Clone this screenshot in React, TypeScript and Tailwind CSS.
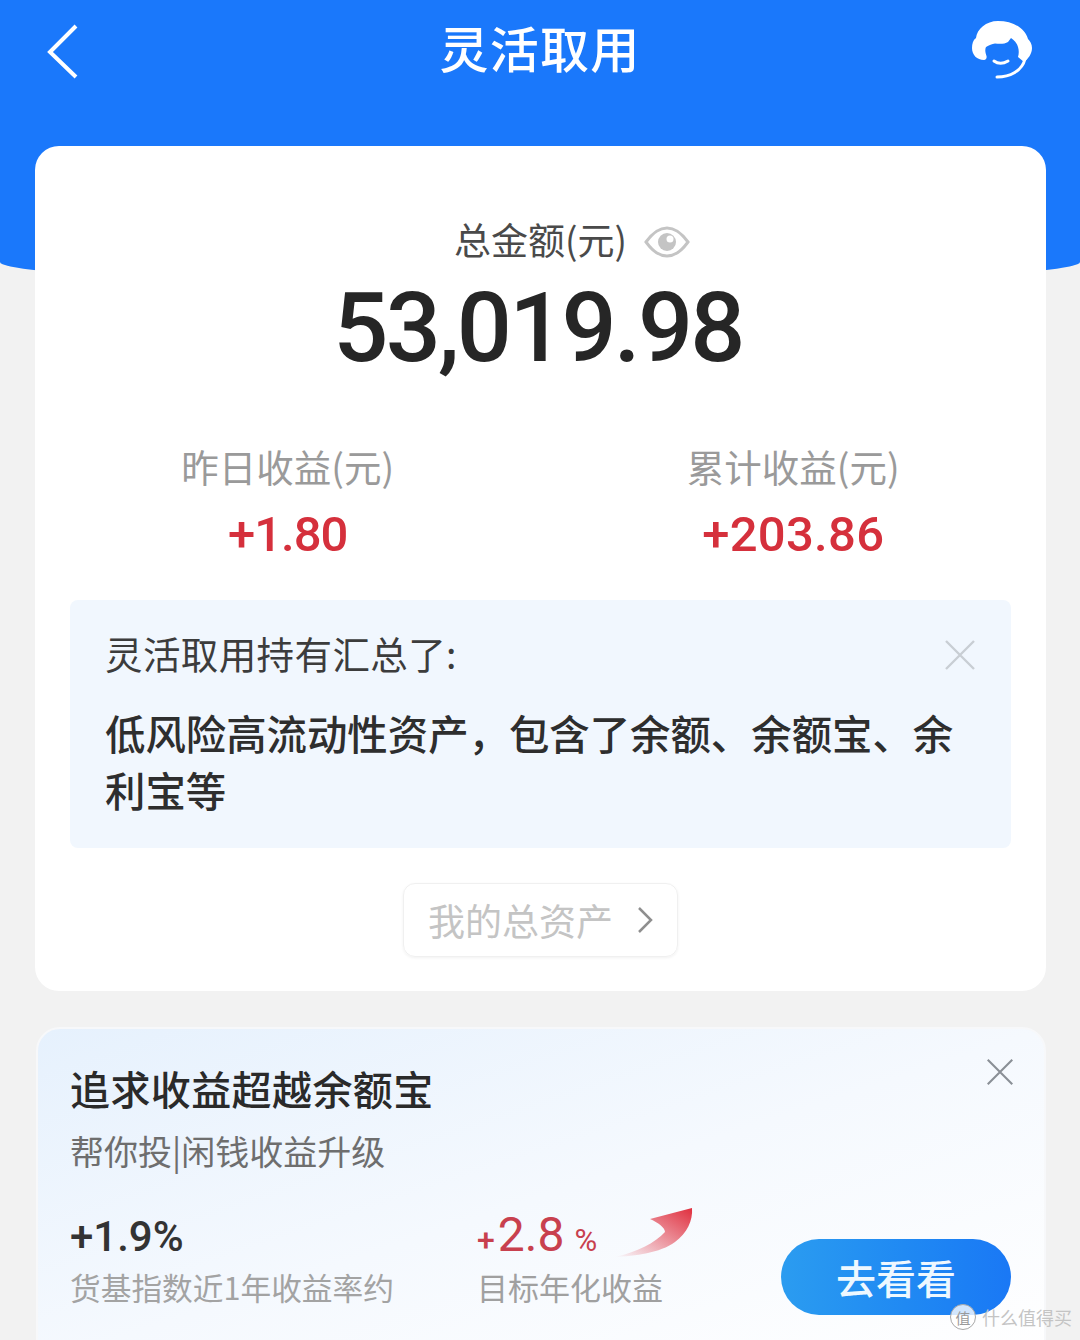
const cjk = 'font-["Noto_Sans_CJK_SC","Noto_Sans",sans-serif]';

function Stat({ label, value, tracking }: { label: string; value: string; tracking: string }) {
  return (
    <div className="flex w-[506px] flex-col items-center">
      <div className="h-[44px] text-[37.5px] leading-[44px] text-[#9a9a9a]">{label}</div>
      <div className={`mt-[19px] h-[56px] font-['Roboto',sans-serif] text-[49px] font-medium leading-[56px] text-[#d5303c] ${tracking}`}>
        {value}
      </div>
    </div>
  );
}

function CloseIcon({ size, color }: { size: number; color: string }) {
  return (
    <svg width={size} height={size} viewBox="0 0 32 32" fill="none" stroke={color} strokeWidth="2.4">
      <path d="M2 2L30 30M30 2L2 30" />
    </svg>
  );
}

export default function App() {
  return (
    <div className={`relative h-[1340px] w-[1080px] overflow-hidden bg-[#f2f2f2] ${cjk}`}>
      <header className="grid h-[285px] grid-cols-[1fr_auto_1fr] items-start rounded-b-[50%_23px] bg-[#1a78fb] px-[46px] pt-[20px]">
        <svg width="34" height="56" viewBox="0 0 34 56" fill="none" stroke="#fff" strokeWidth="4" className="mt-[3px]">
          <path d="M30 3L4 29L30 54" />
        </svg>
        <h1 className="mt-[-8px] text-[49px] font-medium leading-[70px] tracking-[1.3px] text-white">灵活取用</h1>
        <svg width="60" height="60" viewBox="0 0 60 60" className="mr-[2px] mt-[1px] justify-self-end">
          <path
            fill="#fff"
            d="M26 0C14 0 5 8 4 17C1 19 0 23 0 27C0 34 5 39 12 39C14 39 15 37 14.5 35C13 31 13 28 14 26C17 24 20 23 23 22.5C28 23 33 23 36 21C37 20 38 18 39 17C42 19 45 22 46 26C47 29 47 33 46 36L52 41C56 38 60 33 60 27C60 23 58 20 56 18C53 7 41 0 26 0Z"
          />
          <path d="M22 40C26 43 31 43 36 40" fill="none" stroke="#fff" strokeWidth="3" strokeLinecap="round" />
          <path d="M25 56C38 56 50 50 53 38" fill="none" stroke="#fff" strokeWidth="3" strokeLinecap="round" />
        </svg>
      </header>

      <main className="ml-[35px] mr-[34px] mt-[-139px] flex h-[845px] flex-col items-center rounded-[24px] bg-white pt-[69px]">
        <div className="relative flex h-[48px] items-center">
          <span className="text-[37px] leading-[48px] text-[#4a4a4a]">总金额(元)</span>
          <svg width="46" height="34" viewBox="0 0 46 34" className="absolute left-[190px] top-[10px]">
            <path d="M2 17C10 6 16 3 23 3C30 3 36 6 44 17C36 28 30 31 23 31C16 31 10 28 2 17Z" fill="none" stroke="#c4c4c4" strokeWidth="3" />
            <circle cx="23" cy="17" r="9" fill="#c4c4c4" />
            <circle cx="26" cy="14" r="3.5" fill="#fff" />
          </svg>
        </div>
        <div className="ml-[-5px] mt-[13px] h-[104px] font-['Roboto',sans-serif] text-[97px] font-medium leading-[104px] tracking-[-2.8px] text-[#262626]">
          53,019.98
        </div>
        <div className="mt-[64px] flex w-full">
          <Stat label="昨日收益(元)" value="+1.80" tracking="tracking-[-1px]" />
          <Stat label="累计收益(元)" value="+203.86" tracking="tracking-[0.3px]" />
        </div>

        <section className="mt-[37px] h-[248px] w-[941px] rounded-[8px] bg-[#f1f7fe] pl-[35px] pr-[35px] pt-[28px]">
          <div className="flex items-center justify-between">
            <span className="text-[37.5px] leading-[50px] tracking-[0.4px] text-[#3c3c3c]">灵活取用持有汇总了:</span>
            <div className="mt-[4px]">
              <CloseIcon size={32} color="#c9ced4" />
            </div>
          </div>
          <p className="mr-[15px] mt-[26px] text-[40.4px] font-medium leading-[57px] text-[#2e2e2e]">
            低风险高流动性资产，包含了余额、余额宝、余利宝等
          </p>
        </section>

        <button
          type="button"
          className="mt-[35px] flex h-[74px] w-[275px] items-center rounded-[12px] border border-[#f0f0f0] pl-[24px] shadow-[0_1px_3px_rgba(0,0,0,0.06)]"
        >
          <span className="text-[37px] leading-[50px] text-[#c4c4c4]">我的总资产</span>
          <svg width="16" height="26" viewBox="0 0 16 26" fill="none" stroke="#8f8f8f" strokeWidth="2.5" className="ml-[24px]">
            <path d="M2 1L14 13L2 25" />
          </svg>
        </button>
      </main>

      <section className="relative ml-[36px] mr-[34px] mt-[36px] h-[340px] rounded-[24px] border-2 border-[#f7f8fa] bg-gradient-to-br from-[#e6f1fd] via-[#f5f9fe] to-white pl-[32px] pt-[31px]">
        <div className="absolute right-[30px] top-[29px]">
          <CloseIcon size={28} color="#8a8f96" />
        </div>
        <h2 className="text-[40px] font-medium leading-[56px] tracking-[0.4px] text-[#2a2a2a]">追求收益超越余额宝</h2>
        <p className="mt-[10px] text-[34px] leading-[50px] text-[#6e6e6e]">帮你投|闲钱收益升级</p>

        <div className="mt-[33px] flex items-start">
          <div className="w-[407px]">
            <div className="h-[56px] font-['Roboto',sans-serif] text-[42px] font-medium leading-[56px] text-[#333]">+1.9%</div>
            <div className="text-[30.7px] leading-[44px] text-[#a3a3a3]">货基指数近1年收益率约</div>
          </div>
          <div className="w-[304px]">
            <div className="relative mt-[-2px] flex h-[56px] items-baseline font-['Roboto',sans-serif] leading-[56px] text-[#c8404e]">
              <span className="text-[32px] font-medium">+</span>
              <span className="ml-[3px] text-[48px]">2.8</span>
              <span className="ml-[10px] text-[31px]">%</span>
              <svg width="78" height="50" viewBox="0 0 78 50" className="absolute left-[138px] top-0">
                <defs>
                  <linearGradient id="arrow" x1="1" y1="0" x2="0" y2="1">
                    <stop offset="0" stopColor="#e02f3e" />
                    <stop offset="1" stopColor="#e02f3e" stopOpacity="0" />
                  </linearGradient>
                </defs>
                <path fill="url(#arrow)" d="M35 12L77 1C78 14 72 26 60 35C45 46 20 49 0 50C22 45 40 36 50 25C50 21 44 16 35 12Z" />
              </svg>
            </div>
            <div className="mt-[2px] text-[31px] leading-[44px] text-[#a0a0a0]">目标年化收益</div>
          </div>
          <button
            type="button"
            className="mt-[30px] flex h-[76px] w-[230px] shrink-0 items-center justify-center rounded-full bg-gradient-to-r from-[#2b9cf0] to-[#1a78f5] text-[40px] font-medium leading-none text-[#eef8ff]"
          >
            去看看
          </button>
        </div>
      </section>

      <div className="absolute left-[950px] top-[1304px] flex items-center whitespace-nowrap">
        <span className="flex h-[26px] w-[26px] items-center justify-center rounded-full border border-[#a8a8a8] bg-white/80 text-[15px] leading-none text-[#9a9a9a]">值</span>
        <span className="ml-[6px] text-[18px] leading-[26px] text-[#c4c4c4]">什么值得买</span>
      </div>
    </div>
  );
}
